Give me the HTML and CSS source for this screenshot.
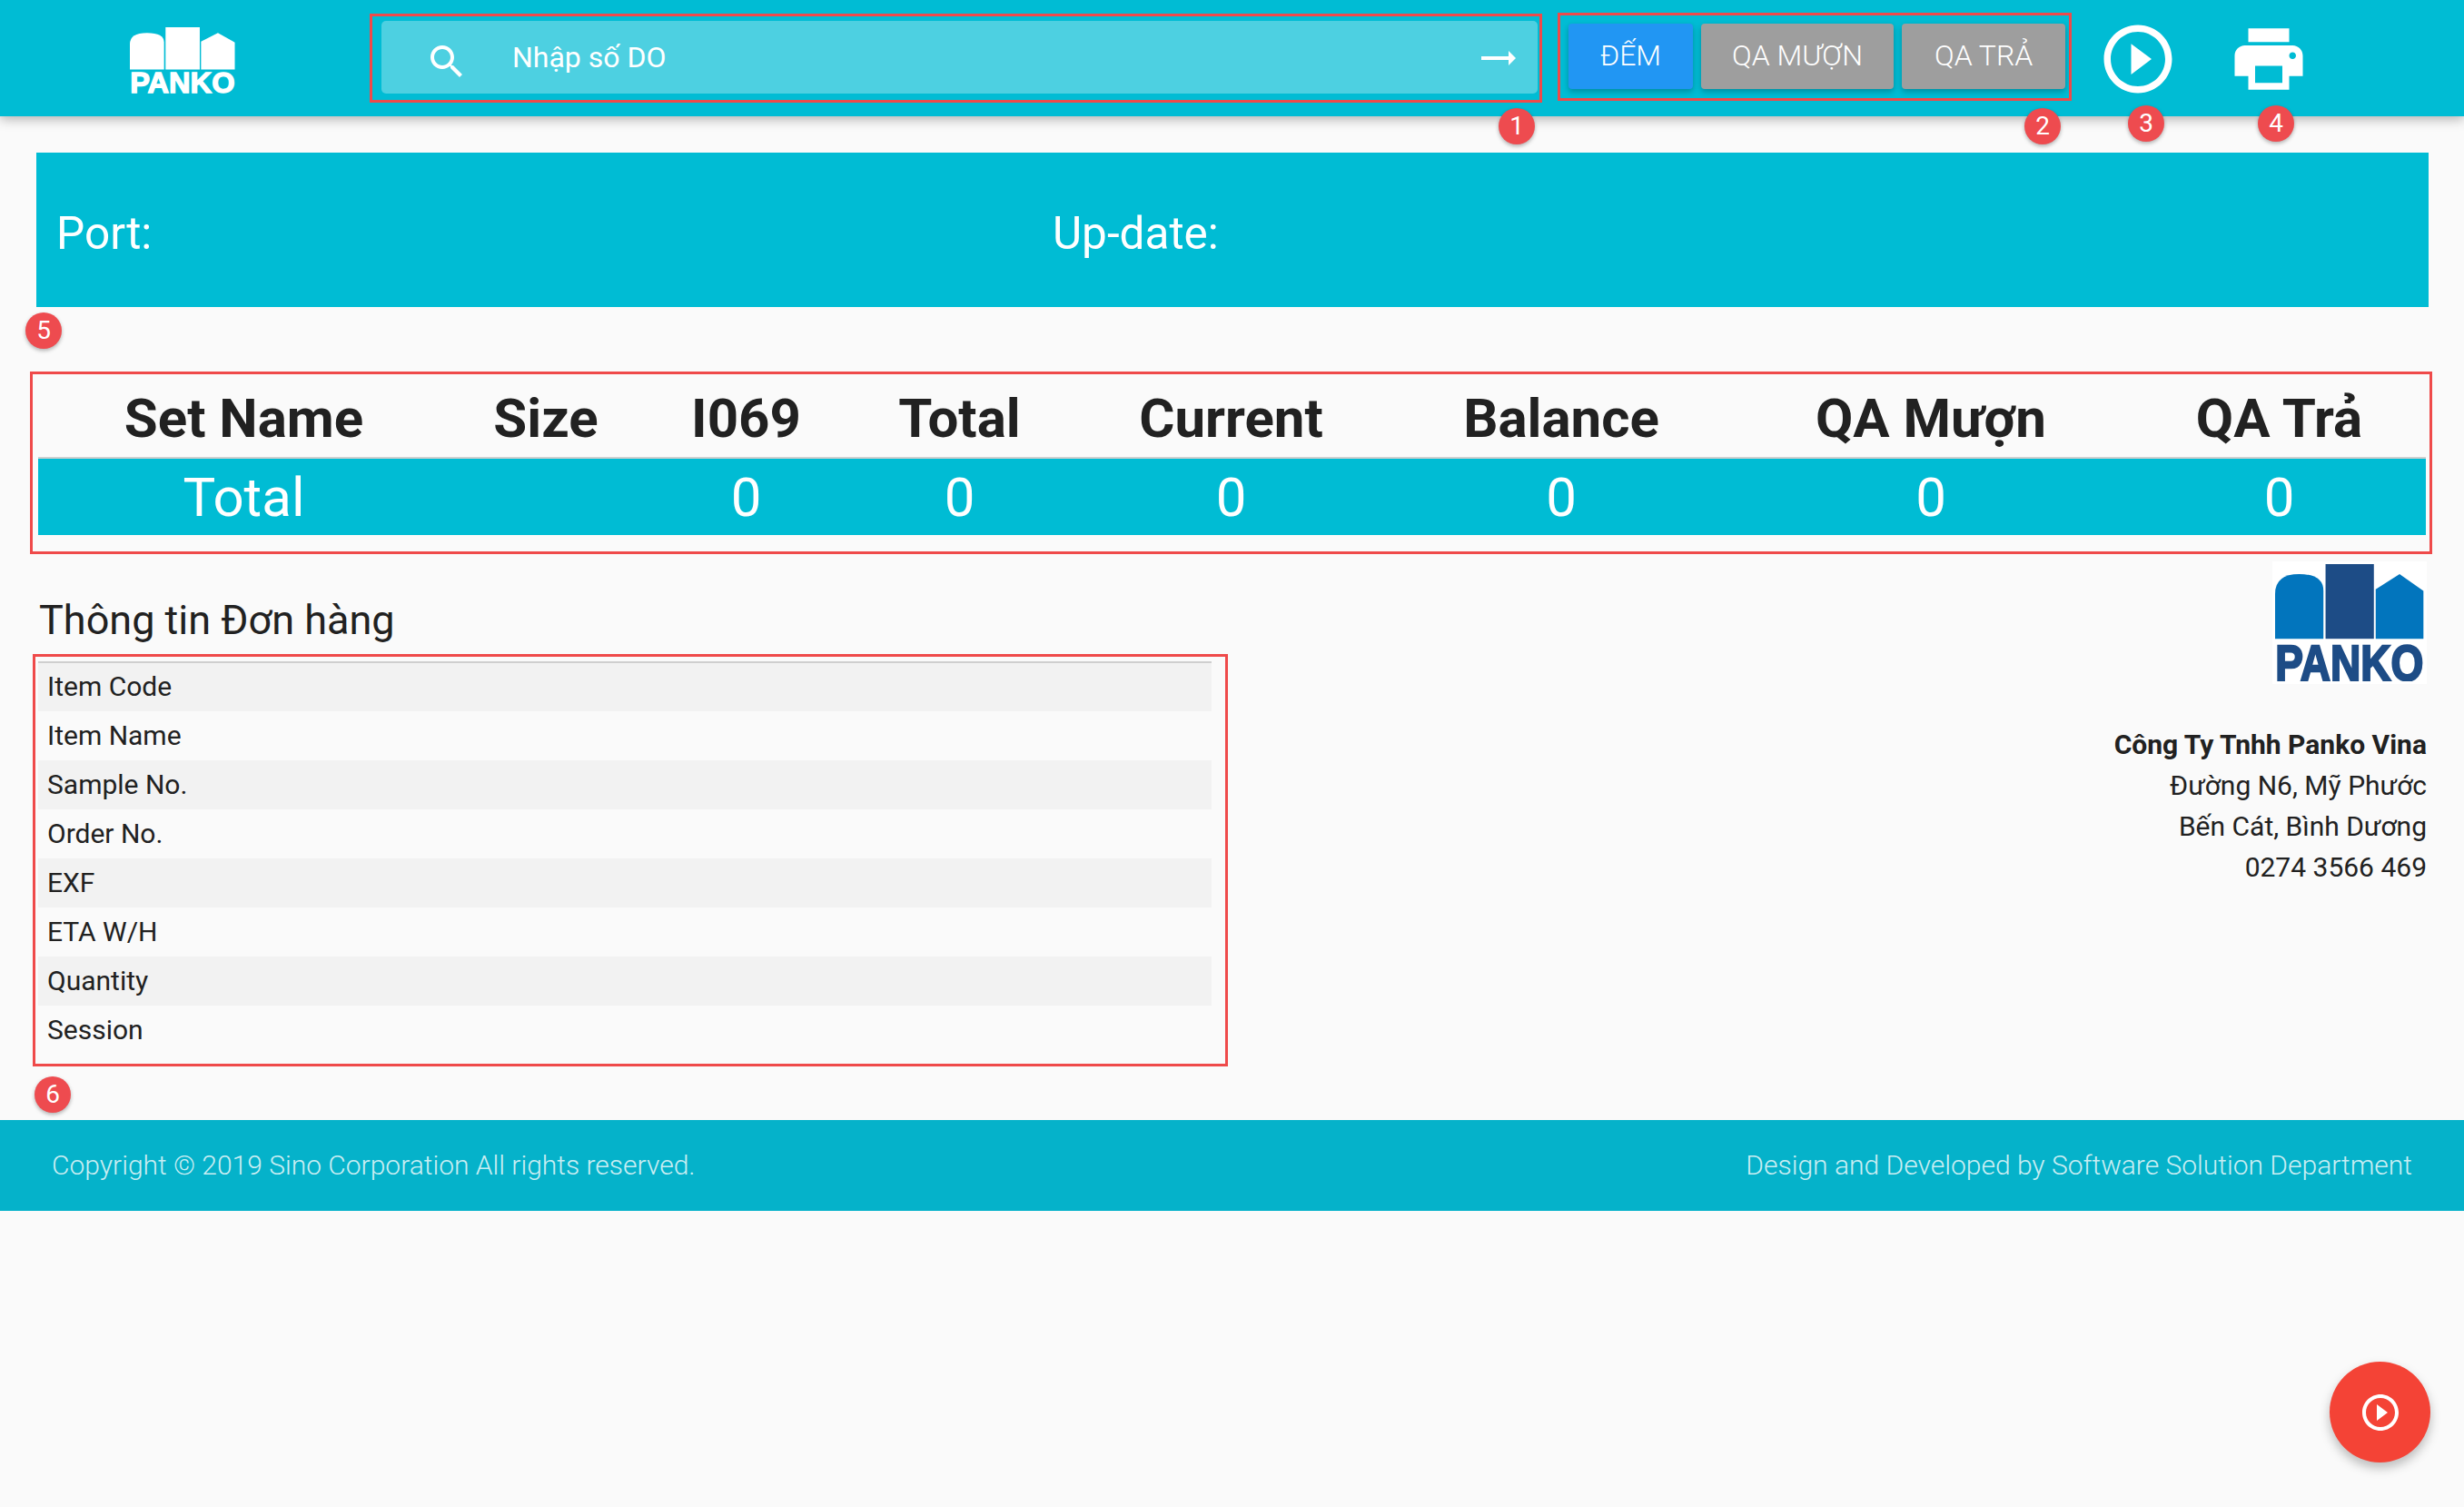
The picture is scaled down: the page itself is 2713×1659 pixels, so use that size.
FILE: index.html
```html
<!DOCTYPE html>
<html lang="vi">
<head>
  <meta charset="UTF-8" />
  <meta name="viewport" content="width=device-width, initial-scale=1" />
  <title>Panko - Đếm hàng</title>
  <link rel="stylesheet" href="styles.css">
</head>
<body>

  <svg class="defs">
    <symbol id="panko-logo" viewBox="0 0 493 386" preserveAspectRatio="none">
      <path class="logo-light" d="M0 246V98Q0 33 80 33Q160 33 160 88V246Z" />
      <rect class="logo-dark" x="167" y="0" width="160" height="246" />
      <path class="logo-light" d="M333 246V83L412 33L491 88V246Z" />
      <text class="logo-text" x="1" y="383" textLength="490" lengthAdjust="spacingAndGlyphs">PANKO</text>
    </symbol>
  </svg>

  <header class="topbar">
    <svg class="topbar-logo"><use href="#panko-logo" /></svg>

    <div class="search-frame">
      <div class="search">
        <svg class="search-icon" viewBox="0 0 24 24"><path d="M15.5 14h-.79l-.28-.27C15.41 12.59 16 11.11 16 9.5 16 5.91 13.09 3 9.5 3S3 5.91 3 9.5 5.91 16 9.5 16c1.61 0 3.09-.59 4.23-1.57l.27.28v.79l5 4.99L20.49 19l-4.99-5zm-6 0C7.01 14 5 11.99 5 9.5S7.01 5 9.5 5 14 7.01 14 9.5 11.99 14 9.5 14z" /></svg>
        <span class="search-text">Nhập số DO</span>
        <svg class="search-arrow" viewBox="0 0 24 24"><path d="M22 12l-4-4v3H3v2h15v3z" /></svg>
      </div>
    </div>

    <div class="mode-frame">
      <button class="mode mode-dem">ĐẾM</button>
      <button class="mode mode-muon">QA MƯỢN</button>
      <button class="mode mode-tra">QA TRẢ</button>
    </div>

    <svg class="tool tool-play" viewBox="0 0 24 24"><path d="M10 16.5l6-4.5-6-4.5v9zM12 2C6.48 2 2 6.48 2 12s4.48 10 10 10 10-4.48 10-10S17.52 2 12 2zm0 18c-4.41 0-8-3.59-8-8s3.59-8 8-8 8 3.59 8 8-3.59 8-8 8z" /></svg>
    <svg class="tool tool-print" viewBox="0 0 24 24"><path d="M19 8H5c-1.66 0-3 1.34-3 3v6h4v4h12v-4h4v-6c0-1.66-1.34-3-3-3zm-3 11H8v-5h8v5zm3-7c-.55 0-1-.45-1-1s.45-1 1-1 1 .45 1 1-.45 1-1 1zm-1-9H6v4h12V3z" /></svg>
  </header>

  <section class="port-band">
    <div>Port:</div>
    <div>Up-date:</div>
  </section>

  <div class="totals-frame">
    <table class="totals">
      <colgroup><col><col><col><col><col><col><col><col></colgroup>
      <thead>
        <tr>
          <th>Set Name</th>
          <th>Size</th>
          <th>I069</th>
          <th>Total</th>
          <th>Current</th>
          <th>Balance</th>
          <th>QA Mượn</th>
          <th>QA Trả</th>
        </tr>
      </thead>
      <tbody>
        <tr>
          <td>Total</td>
          <td></td>
          <td>0</td>
          <td>0</td>
          <td>0</td>
          <td>0</td>
          <td>0</td>
          <td>0</td>
        </tr>
      </tbody>
    </table>
  </div>

  <section class="order">
    <div class="order-left">
      <h2>Thông tin Đơn hàng</h2>
      <div class="order-frame">
        <table class="order-table">
          <tr><td>Item Code</td></tr>
          <tr><td>Item Name</td></tr>
          <tr><td>Sample No.</td></tr>
          <tr><td>Order No.</td></tr>
          <tr><td>EXF</td></tr>
          <tr><td>ETA W/H</td></tr>
          <tr><td>Quantity</td></tr>
          <tr><td>Session</td></tr>
        </table>
      </div>
    </div>

    <div class="company">
      <svg class="company-logo"><use href="#panko-logo" /></svg>
      <p class="company-name">Công Ty Tnhh Panko Vina</p>
      <p>Đường N6, Mỹ Phước</p>
      <p>Bến Cát, Bình Dương</p>
      <p>0274 3566 469</p>
    </div>
  </section>

  <footer class="footer">
    <span>Copyright © 2019 Sino Corporation All rights reserved.</span>
    <span>Design and Developed by Software Solution Department</span>
  </footer>

  <!-- so thu tu chu thich -->
  <span class="badge badge-1">1</span>
  <span class="badge badge-2">2</span>
  <span class="badge badge-3">3</span>
  <span class="badge badge-4">4</span>
  <span class="badge badge-5">5</span>
  <span class="badge badge-6">6</span>

  <button class="fab">
    <svg viewBox="0 0 24 24"><path d="M10 16.5l6-4.5-6-4.5v9zM12 2C6.48 2 2 6.48 2 12s4.48 10 10 10 10-4.48 10-10S17.52 2 12 2zm0 18c-4.41 0-8-3.59-8-8s3.59-8 8-8 8 3.59 8 8-3.59 8-8 8z" /></svg>
  </button>

</body>
</html>
```

FILE: styles.css
```css
body {
  font-family: Roboto, "Noto Sans", Arial, sans-serif;
  background-color: #fafafa;
  color: #212121;
  margin: 0;
  min-height: 1659px;
  position: relative;
}

.defs {
  display: none;
}

/* mau logo doi theo cho dat logo */
.logo-light {
  fill: var(--logo-light);
}

.logo-dark {
  fill: var(--logo-dark);
}

.logo-text {
  font-family: "Liberation Sans", Arial, sans-serif;
  font-weight: bold;
  font-size: 166px;
  fill: var(--logo-dark);
  stroke: var(--logo-dark);
  stroke-width: 7px;
}

/* thanh tren cung */
.topbar {
  display: flex;
  align-items: flex-start;
  height: 128px;
  box-sizing: border-box;
  padding: 14px 0 0 143px;
  background: #00bcd4;
  box-shadow: 0 3px 12px rgba(0, 0, 0, 0.3);
  color: #fff;
}

.topbar-logo {
  --logo-light: #fff;
  --logo-dark: #fff;
  width: 116px;
  height: 73px;
  margin: 16px 148px 0 0;
}

.search-frame {
  width: 1291px;
  box-sizing: border-box;
  margin-top: 1px;
  padding: 5px 2px 7px 10px;
  border: 3px solid #ef4a4a;
}

.search {
  display: flex;
  align-items: center;
  height: 80px;
  padding: 0 20px 0 48px;
  background: #4dd0e1;
  border-radius: 5px;
}

.search-icon {
  width: 48px;
  height: 48px;
  fill: #fff;
  margin-top: 10px;
}

.search-text {
  margin-left: 48px;
  font-size: 32px;
  flex: 1;
}

.search-arrow {
  width: 48px;
  height: 48px;
  fill: #fff;
  margin-top: 2px;
}

.mode-frame {
  display: flex;
  gap: 9px;
  width: 566px;
  box-sizing: border-box;
  margin-left: 17px;
  padding: 9px 4px 10px 9px;
  border: 3px solid #ef4a4a;
}

.mode {
  height: 72px;
  padding: 0 0 3px;
  border: none;
  border-radius: 4px;
  font-family: inherit;
  font-size: 32px;
  font-weight: 300;
  color: #fff;
  box-shadow: 0 3px 6px rgba(0, 0, 0, 0.25);
}

.mode-dem {
  width: 137px;
  background: #2196f3;
}

.mode-muon {
  width: 213px;
  background: #9e9e9e;
}

.mode-tra {
  width: 180px;
  background: #9e9e9e;
}

.tool {
  width: 90px;
  height: 90px;
  fill: #fff;
  margin-top: 6px;
}

.tool-play {
  margin-left: 28px;
}

.tool-print {
  margin-left: 54px;
}

/* port */
.port-band {
  display: grid;
  grid-template-columns: 1097px 1fr;
  align-items: center;
  height: 170px;
  box-sizing: border-box;
  margin: 40px 39px 0 40px;
  padding: 7px 0 0 22px;
  background: #00bcd4;
  color: #fff;
  font-size: 49.5px;
}

/* bang tong */
.totals-frame {
  margin: 71px 35px 0 33px;
  padding: 0 4px 18px 6px;
  border: 3px solid #ef4a4a;
}

.totals {
  width: 2629px;
  table-layout: fixed;
  border-collapse: collapse;
}

.totals col:nth-child(1) { width: 453px; }
.totals col:nth-child(2) { width: 212px; }
.totals col:nth-child(3) { width: 229px; }
.totals col:nth-child(4) { width: 241px; }
.totals col:nth-child(5) { width: 357px; }
.totals col:nth-child(6) { width: 370px; }
.totals col:nth-child(7) { width: 444px; }
.totals col:nth-child(8) { width: 323px; }

.totals th {
  height: 92px;
  padding: 6px 0 0;
  box-sizing: border-box;
  font-size: 60px;
  font-weight: 700;
  border-bottom: 2px solid #cfcfcf;
}

.totals td {
  height: 84px;
  padding: 0;
  text-align: center;
  font-size: 60px;
  background: #00bcd4;
  color: #fff;
}

/* thong tin don hang */
.order {
  display: flex;
  justify-content: space-between;
  padding: 0 41px 59px 36px;
  align-items: flex-start;
}

.order-left {
  width: 1316px;
}

.order h2 {
  margin: 39px 0 3px 7px;
  font-size: 45px;
  line-height: 68px;
  font-weight: 400;
}

.order-frame {
  padding: 5px 15px 10px 3px;
  border: 3px solid #ef4a4a;
}

.order-table {
  width: 100%;
  border-collapse: collapse;
  border-top: 2px solid #cfcfcf;
}

.order-table td {
  height: 54px;
  box-sizing: border-box;
  padding: 0 0 2px 10px;
  font-size: 30px;
}

.order-table tr:nth-child(odd) {
  background: #f2f2f2;
}

.company {
  display: flex;
  flex-direction: column;
  align-items: flex-end;
  padding-top: 8px;
}

.company p {
  margin: 0;
  font-size: 30px;
  line-height: 45px;
}

.company .company-name {
  font-weight: 700;
}

.company-logo {
  --logo-light: #0275bd;
  --logo-dark: #1d4c86;
  width: 170px;
  height: 135px;
  margin-bottom: 44px;
  padding: 3px;
  box-sizing: border-box;
  background: #fff;
}

.footer {
  display: flex;
  justify-content: space-between;
  align-items: center;
  height: 100px;
  padding: 0 57px 2px;
  box-sizing: border-box;
  background: #05b2ca;
  color: rgba(255, 255, 255, 0.8);
  font-size: 30px;
  font-weight: 300;
}

/* chu thich so */
.badge {
  position: absolute;
  width: 40px;
  height: 40px;
  line-height: 40px;
  text-align: center;
  border-radius: 50%;
  background: #ee4b4f;
  color: #fff;
  font-size: 28px;
  box-shadow: 0 2px 4px rgba(0, 0, 0, 0.3);
}

.badge-1 { left: 1650px; top: 119px; }
.badge-2 { left: 2229px; top: 119px; }
.badge-3 { left: 2343px; top: 116px; }
.badge-4 { left: 2486px; top: 116px; }
.badge-5 { left: 28px; top: 344px; }
.badge-6 { left: 38px; top: 1185px; }

.fab {
  position: fixed;
  right: 37px;
  bottom: 49px;
  display: flex;
  align-items: center;
  justify-content: center;
  width: 111px;
  height: 111px;
  padding: 0;
  border: none;
  border-radius: 50%;
  background: #f44336;
  box-shadow: 0 6px 12px rgba(0, 0, 0, 0.25);
}

.fab svg {
  width: 48px;
  height: 48px;
  fill: #fff;
}
```
